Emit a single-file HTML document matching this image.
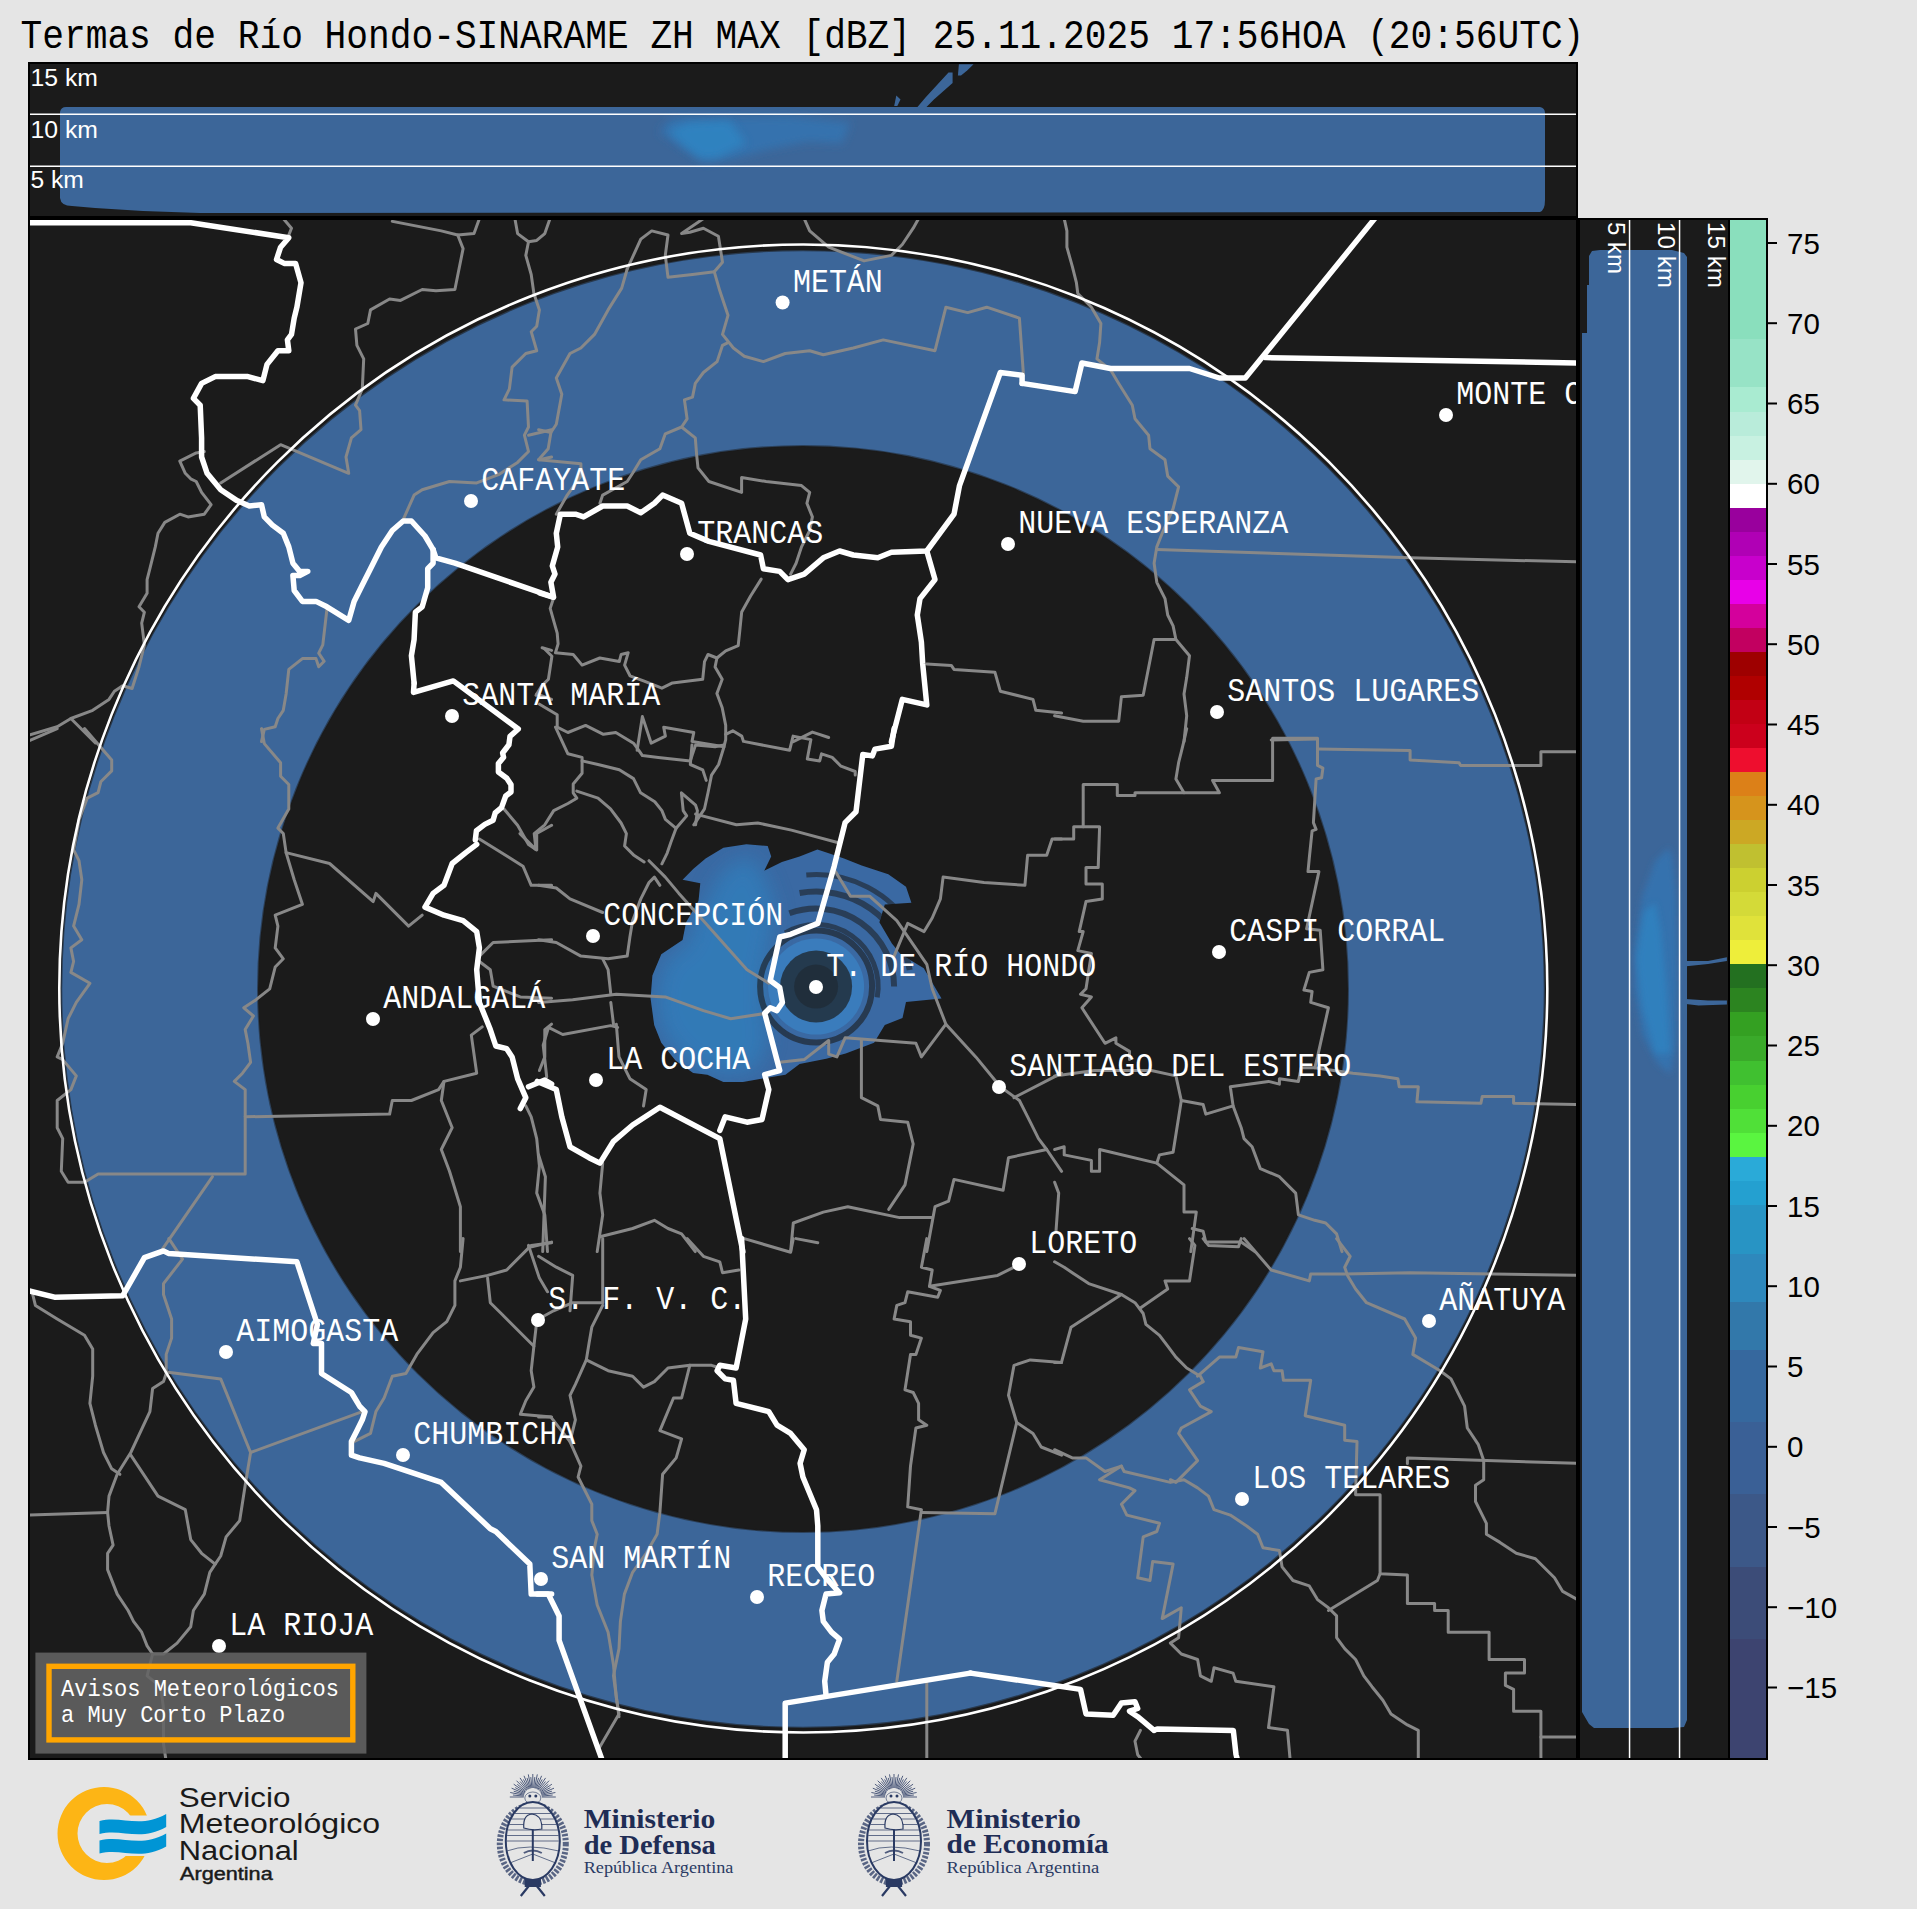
<!DOCTYPE html>
<html><head><meta charset="utf-8">
<style>
html,body{margin:0;padding:0;background:#e5e5e5;width:1917px;height:1909px;overflow:hidden}
svg{position:absolute;left:0;top:0;display:block}
.mono{font-family:"Liberation Mono",monospace}
.sans{font-family:"Liberation Sans",sans-serif}
</style></head><body>
<svg width="1917" height="1909" viewBox="0 0 1917 1909">
<defs>
<clipPath id="mapclip"><rect x="30" y="220" width="1546" height="1538"/></clipPath>
<clipPath id="topclip"><rect x="30" y="64" width="1546" height="152"/></clipPath>
<clipPath id="sideclip"><rect x="1580" y="220" width="148" height="1538"/></clipPath>
</defs>
<rect x="0" y="0" width="1917" height="1909" fill="#e5e5e5"/>
<!-- title -->
<text class="mono" x="20.5" y="47.6" font-size="36.2" fill="#000" transform="translate(0,47.6) scale(1,1.1) translate(0,-47.6)">Termas de Río Hondo-SINARAME ZH MAX [dBZ] 25.11.2025 17:56HOA (20:56UTC)</text>
<!-- top panel -->
<rect x="28" y="62" width="1550" height="156" fill="#000"/>
<rect x="30" y="64" width="1546" height="152" fill="#1b1b1b"/>
<g clip-path="url(#topclip)">
<path d="M60,112 Q61,107 66,107 L1540,107 Q1545,108 1545,113 L1545,200 Q1545,210 1540,212 L200,213 L143,211 L95,208 L72,206 Q61,206 60,198 Z" fill="#3c6699"/>
<defs><filter id="tblur" x="-20%" y="-50%" width="140%" height="200%"><feGaussianBlur stdDeviation="4"/></filter></defs><path d="M659.5,132.0 L670.9,118.4 L725.2,117.4 L787.8,116.3 L850.4,122.6 L842.0,143.5 L808.7,141.4 L766.9,149.7 L735.6,158.1 L704.3,162.2 L687.6,151.8 Z" fill="#3672ae" filter="url(#tblur)"/><path d="M668.9,130.9 L687.6,122.6 L729.4,120.5 L746.1,143.5 L716.8,158.1 L700.2,158.1 L683.5,145.6 Z" fill="#2d86c4" opacity="0.8" filter="url(#tblur)"/><path d="M913.0,112.2 L925.5,97.6 L948.5,72.5 L952.6,72.5 L952.6,83.0 L933.9,99.6 L921.3,112.2 Z" fill="#3c6699"/><path d="M894.2,105.9 L896.3,95.5 L900.5,99.6 L897.3,105.9 Z" fill="#3c6699"/><path d="M957.9,75.6 L958.9,64.2 L973.5,64.2 L967.2,70.4 L961.0,75.6 Z" fill="#3c6699"/>
<rect x="30" y="113.5" width="1546" height="1.5" fill="#fff"/>
<rect x="30" y="165.5" width="1546" height="1.5" fill="#fff"/>
<g class="sans" font-size="23" fill="#fff"><text x="30.5" y="86" textLength="67.4" lengthAdjust="spacingAndGlyphs">15 km</text><text x="30.5" y="138.2" textLength="67.4" lengthAdjust="spacingAndGlyphs">10 km</text><text x="30.5" y="188.3" textLength="53.4" lengthAdjust="spacingAndGlyphs">5 km</text></g>
</g>
<!-- map -->
<rect x="28" y="218" width="1550" height="1542" fill="#000"/>
<rect x="30" y="220" width="1546" height="1538" fill="#1b1b1b"/>
<g clip-path="url(#mapclip)">
<path fill-rule="evenodd" fill="#3c6699" d="M61,989 A742,739 0 1,0 1545,989 A742,739 0 1,0 61,989 Z M258,989 A545,543 0 1,0 1348,989 A545,543 0 1,0 258,989 Z"/><ellipse cx="803" cy="989" rx="742" ry="739" fill="none" stroke="#1b1b1b" stroke-width="2.5" opacity="0.6"/><ellipse cx="803" cy="989" rx="545" ry="543" fill="none" stroke="#1b1b1b" stroke-width="2" opacity="0.5"/>
<defs><clipPath id="blobclip"><path d="M650.6,998.5 L652.4,975.4 L661.3,954.2 L682.6,940.0 L686.1,922.2 L698.5,900.9 L700.3,883.2 L682.6,879.7 L693.2,869.0 L705.6,858.4 L723.4,847.7 L746.4,844.2 L767.7,846.0 L771.2,856.6 L764.2,870.8 L781.9,861.9 L799.6,856.6 L817.4,849.5 L828.0,853.1 L844.0,858.4 L861.7,865.5 L888.3,874.3 L906.0,886.8 L911.4,902.7 L884.8,904.5 L879.4,922.2 L891.9,943.5 L900.7,954.2 L923.8,968.3 L941.5,998.5 L906.0,1002.0 L902.5,1018.0 L884.8,1025.1 L874.1,1042.8 L845.7,1053.5 L826.2,1058.8 L799.6,1064.1 L785.4,1074.8 L764.2,1078.3 L742.9,1081.9 L723.4,1081.9 L707.4,1074.8 L693.2,1073.0 L675.5,1060.6 L661.3,1042.8 L654.2,1025.1 Z"/></clipPath><filter id="blur8" x="-30%" y="-30%" width="160%" height="160%"><feGaussianBlur stdDeviation="10"/></filter></defs><path d="M650.6,998.5 L652.4,975.4 L661.3,954.2 L682.6,940.0 L686.1,922.2 L698.5,900.9 L700.3,883.2 L682.6,879.7 L693.2,869.0 L705.6,858.4 L723.4,847.7 L746.4,844.2 L767.7,846.0 L771.2,856.6 L764.2,870.8 L781.9,861.9 L799.6,856.6 L817.4,849.5 L828.0,853.1 L844.0,858.4 L861.7,865.5 L888.3,874.3 L906.0,886.8 L911.4,902.7 L884.8,904.5 L879.4,922.2 L891.9,943.5 L900.7,954.2 L923.8,968.3 L941.5,998.5 L906.0,1002.0 L902.5,1018.0 L884.8,1025.1 L874.1,1042.8 L845.7,1053.5 L826.2,1058.8 L799.6,1064.1 L785.4,1074.8 L764.2,1078.3 L742.9,1081.9 L723.4,1081.9 L707.4,1074.8 L693.2,1073.0 L675.5,1060.6 L661.3,1042.8 L654.2,1025.1 Z" fill="#3a69a3"/><g clip-path="url(#blobclip)"><path d="M656.0,998.5 L659.5,975.4 L668.4,957.7 L689.7,941.7 L693.2,922.2 L707.4,900.9 L714.5,883.2 L728.7,865.5 L750.0,856.6 L764.2,876.1 L774.8,904.5 L771.2,936.4 L764.2,971.9 L764.2,1007.4 L767.7,1042.8 L755.3,1069.4 L725.1,1074.8 L693.2,1065.9 L671.9,1046.4 L659.5,1025.1 Z" fill="#2f85c4" opacity="0.6" filter="url(#blur8)"/><path d="M785.1,932.9 A62,62 0 0,1 877.2,997.4" fill="none" stroke="#1b1b1b" stroke-width="5" opacity="0.55"/><path d="M789.4,913.3 A78,78 0 0,1 894.1,986.6" fill="none" stroke="#1b1b1b" stroke-width="6" opacity="0.55"/><path d="M799.6,893.0 A95,95 0 0,1 909.7,970.1" fill="none" stroke="#1b1b1b" stroke-width="6" opacity="0.55"/><path d="M806.3,875.0 A112,112 0 0,1 913.1,930.6" fill="none" stroke="#1b1b1b" stroke-width="5" opacity="0.55"/><circle cx="816.1" cy="986.6" r="56" fill="none" stroke="#1b1b1b" stroke-width="6" opacity="0.6"/></g><circle cx="816.1" cy="986.6" r="48" fill="#3a7cbc"/><circle cx="816.1" cy="986.6" r="36" fill="#1b1b1b" opacity="0.68"/><circle cx="816.1" cy="986.6" r="22" fill="#1b1b1b" opacity="0.35"/>
<g fill="none" stroke="#888888" stroke-width="3" stroke-linejoin="round" stroke-linecap="round"><path d="M30.0,734.8 L57.2,726.7 L70.9,718.5 L92.7,710.3 L109.0,699.4 L114.4,691.2 L122.6,685.8 L132.1,688.5 L139.0,666.7 L144.4,644.9 L141.7,623.1 L144.4,612.2 L139.0,606.8 L147.1,593.2 L147.1,579.6 L149.9,568.7 L155.3,546.9 L158.0,533.3 L164.8,522.4 L179.8,514.2 L188.0,516.9 L204.3,514.2 L211.1,504.7 L201.6,492.4 L196.2,481.5 L190.7,478.8 L185.3,473.3 L179.8,461.1 L196.2,452.9 L204.3,451.5"/><path d="M70.9,718.5 L95.4,743.0"/><path d="M220.7,482.9 L280.6,444.7 L348.7,473.3 L346.0,457.0 L351.4,437.9 L361.0,429.7 L359.6,410.7 L355.5,405.2 L362.3,388.9 L363.7,358.9 L356.9,345.3 L355.5,329.0 L367.8,323.5 L370.5,309.9 L389.6,299.0 L400.5,300.4 L422.2,289.5 L435.9,290.8 L454.9,289.5 L463.1,248.6 L457.7,235.0 L441.3,230.9 L392.3,221.4"/><path d="M457.7,235.0 L474.0,233.6 L479.4,218.6"/><path d="M283.3,218.6 L291.5,228.2 L288.8,235.0"/><path d="M514.9,218.6 L517.6,233.6 L528.5,241.8 L536.7,240.4 L544.8,233.6 L550.0,218.6"/><path d="M528.5,241.8 L525.8,255.4 L531.2,274.5 L533.9,293.5 L539.4,309.9 L536.7,326.2 L531.2,331.7 L536.7,350.7 L525.8,353.5 L512.1,367.1 L509.4,388.9 L504.0,399.8 L527.1,401.1 L528.5,427.0 L524.4,435.2 L528.5,451.5 L517.6,462.4 L498.5,474.7 L476.7,482.9 L449.5,481.5 L422.2,489.7 L414.1,495.1 L403.2,519.6"/><path d="M528.5,435.2 L551.6,429.7"/><path d="M539.4,459.7 L551.6,457.0"/><path d="M326.9,609.5 L322.8,644.9 L318.7,653.1 L324.2,661.3 L318.7,666.7 L316.0,658.6 L302.4,658.6 L288.8,669.4 L286.1,694.0 L283.3,710.3 L277.9,718.5 L275.2,726.7 L264.3,729.4 L261.5,741.6"/><path d="M542.1,647.7 L551.6,650.4"/><path d="M536.7,694.0 L551.6,699.4"/><path d="M627.2,269.0 L640.8,239.1 L651.7,230.9 L668.0,235.0 L665.3,255.4 L668.0,277.2 L692.5,274.5 L714.3,271.8 L722.5,262.2 L718.4,236.3 L703.4,228.2 L689.8,232.3 L681.6,233.6 L703.4,218.6"/><path d="M714.3,271.8 L719.8,290.8 L728.0,315.3 L722.5,334.4 L733.4,348.0 L744.3,356.2 L763.4,361.6 L785.2,353.5 L809.7,350.7 L823.3,354.8 L853.3,348.0 L883.2,339.9 L935.0,350.7 L945.9,307.2 L967.7,312.6 L986.7,307.2 L1019.4,318.1 L1023.5,375.3"/><path d="M627.2,269.0 L621.7,288.1 L608.1,309.9 L594.5,334.4 L580.9,348.0 L570.0,353.5 L556.3,378.0 L561.8,394.3 L556.3,424.3 L550.9,432.5 L538.6,429.7"/><path d="M550.9,432.5 L548.2,448.8 L538.6,459.7"/><path d="M538.6,459.7 L580.9,463.8 L580.9,476.1 L567.2,495.1 L556.3,514.2"/><path d="M728.0,342.6 L722.5,345.3 L717.1,361.6 L703.4,372.5 L695.3,383.4 L692.5,397.1 L684.4,399.8 L687.1,418.8 L681.6,427.0 L665.3,433.8 L659.9,448.8 L640.8,459.7 L632.6,473.3 L627.2,481.5 L602.7,495.1 L599.9,503.3"/><path d="M681.6,427.0 L695.3,437.9 L696.6,454.3 L698.0,467.9 L708.9,481.5 L741.6,492.4 L741.6,477.4 L766.1,481.5 L801.5,485.6 L809.7,492.4 L806.9,503.3 L812.4,516.9 L809.7,530.5 L801.5,546.9 L796.1,563.2 L790.6,574.1"/><path d="M926.8,664.0 L951.3,665.4 L954.0,669.4 L994.9,672.2 L1000.3,691.2 L1033.0,699.4 L1035.8,710.3 L1061.6,713.0"/><path d="M793.3,741.6 L812.4,732.1 L828.7,737.5"/><path d="M804.2,218.6 L809.7,230.9 L828.7,247.2 L864.1,260.9 L891.4,255.4 L902.3,244.5 L913.2,228.2 L918.6,218.6"/><path d="M1064.2,218.6 L1066.9,230.9 L1066.9,247.2 L1072.3,266.3 L1076.4,282.7 L1077.8,293.5 L1091.4,307.2 L1100.9,323.5 L1099.6,342.6 L1096.9,358.9 L1110.5,369.8 L1118.7,383.4 L1132.3,405.2 L1135.0,418.8 L1148.6,435.2 L1150.0,448.8 L1165.0,459.7 L1167.7,476.1 L1178.6,486.9 L1173.1,508.7 L1162.2,533.3 L1156.8,546.9 L1154.1,563.2 L1156.8,582.3 L1165.0,598.6 L1167.7,615.0 L1173.1,625.9 L1175.9,639.5 L1189.5,655.8 L1186.7,677.6 L1184.0,694.0 L1186.7,715.8 L1184.0,741.6"/><path d="M1156.8,549.6 L1410.1,557.8 L1577.6,561.9"/><path d="M1175.9,639.5 L1154.1,639.5 L1143.2,695.3 L1121.4,696.7 L1118.7,721.2 L1083.2,721.2 L1054.6,715.8"/><path d="M1271.2,740.0 L1317.5,738.9"/><path d="M28.6,740.9 L57.2,728.6"/><path d="M84.5,728.6 L111.7,760.0 L111.7,770.9 L100.8,781.8 L98.1,792.7 L87.2,798.1 L79.0,819.9 L73.6,849.9 L79.0,860.7 L81.8,879.8 L79.0,904.3 L73.6,926.1 L81.8,939.7 L70.9,947.9 L73.6,961.5 L70.9,972.4 L89.9,983.3 L76.3,1002.4 L68.1,1018.7 L62.7,1043.3 L57.2,1056.9 L62.7,1059.6 L76.3,1075.9 L70.9,1089.6 L57.2,1100.5 L57.2,1127.7 L62.7,1138.6 L61.3,1171.3 L68.1,1182.2 L84.5,1182.2 L98.1,1174.0 L245.2,1174.0 L245.2,1089.6 L234.3,1081.4 L242.5,1073.2 L250.6,1062.3 L247.9,1043.3 L245.2,1029.6 L253.4,1016.0 L243.8,1007.8 L256.1,999.7 L269.7,988.8 L275.2,967.0 L283.3,958.8 L275.2,947.9 L277.9,926.1 L275.2,915.2 L302.4,904.3 L294.2,879.8 L286.1,852.6 L283.3,833.5 L277.9,828.1 L288.8,809.0 L288.8,784.5 L280.6,776.3 L280.6,762.7 L264.3,743.6 L261.5,728.6"/><path d="M286.1,852.6 L329.6,863.5 L373.2,901.6 L375.9,893.4 L408.6,926.1 L422.2,915.2"/><path d="M245.2,1116.8 L389.6,1114.1 L392.3,1100.5 L411.4,1100.5 L438.6,1089.6 L444.0,1081.4 L476.7,1073.2 L471.3,1035.1 L482.2,1026.9"/><path d="M444.0,1081.4 L441.3,1100.5 L452.2,1127.7 L441.3,1149.5 L449.5,1171.3 L460.4,1206.7 L460.4,1251.6"/><path d="M212.5,1176.7 L160.7,1251.6"/><path d="M479.4,839.0 L523.0,866.2 L531.2,885.3 L551.6,885.3"/><path d="M504.0,809.0 L517.6,825.3 L528.5,844.4 L536.7,849.9 L536.7,833.5 L551.6,825.3"/><path d="M479.4,956.1 L493.1,942.5 L551.6,939.7"/><path d="M479.4,961.5 L490.3,969.7 L493.1,986.1 L520.3,996.9 L551.6,998.3"/><path d="M525.8,1105.9 L531.2,1116.8 L536.7,1138.6 L539.4,1165.8 L536.7,1193.1 L544.8,1214.9 L547.5,1251.6"/><path d="M539.4,1070.5 L544.8,1056.9 L544.8,1029.6 L551.6,1024.2"/><path d="M528.5,1247.5 L551.6,1242.1"/><path d="M649.0,860.7 L665.3,877.1 L678.9,893.4 L703.4,920.7 L747.0,969.7 L768.8,983.3"/><path d="M538.6,885.3 L556.3,888.0 L570.0,898.9 L602.7,912.5"/><path d="M538.6,939.7 L556.3,942.5 L580.9,956.1 L608.1,958.8 L627.2,956.1 L629.9,937.0 L632.6,920.7 L640.8,898.9 L649.0,882.5 L654.4,877.1 L659.9,885.3"/><path d="M538.6,1002.4 L572.7,999.7 L616.3,994.2 L665.3,996.9 L703.4,1010.6 L730.7,1018.7 L766.1,1013.3"/><path d="M546.7,1077.0 L543.2,1045.1 L548.5,1027.4 L562.7,1034.5 L610.6,1025.6 L617.7,1027.4"/><path d="M610.8,1002.4 L613.5,1024.2"/><path d="M610.8,994.2 L608.1,969.7 L602.7,958.8"/><path d="M616.3,1024.2 L619.0,1056.9 L629.9,1078.7 L646.2,1089.6 L643.5,1105.9"/><path d="M835.5,871.6 L850.5,896.2 L869.6,896.2 L896.8,920.7 L926.8,964.3 L932.2,988.8 L945.9,1024.2 L975.8,1056.9 L1000.3,1086.8 L1019.4,1100.5 L1030.3,1122.2 L1038.5,1138.6 L1046.7,1149.5 L1061.6,1171.3"/><path d="M894.1,956.1 L907.7,923.4 L924.1,931.6 L932.2,918.0 L940.4,898.9 L943.1,877.1 L984.0,882.5 L1024.9,885.3 L1027.6,855.3 L1046.7,855.3 L1052.1,839.0 L1061.6,839.0"/><path d="M945.9,1024.2 L921.4,1056.9 L915.9,1043.3 L845.1,1037.8 L836.9,1056.9 L828.7,1054.1 L828.7,1040.5 L804.2,1059.6 L779.7,1062.3"/><path d="M861.4,1040.5 L861.4,1097.7 L877.8,1105.9 L880.5,1119.5 L907.7,1122.2 L913.2,1144.0 L905.0,1184.9 L888.7,1209.4"/><path d="M1014.0,1097.7 L1061.6,1073.2"/><path d="M1046.7,1149.5 L1008.5,1157.7 L1003.1,1190.3 L954.0,1179.4 L948.6,1201.2 L935.0,1206.7 L926.8,1251.6"/><path d="M790.6,1251.6 L793.3,1223.0 L823.3,1212.1 L847.8,1206.7 L899.6,1217.6 L932.2,1217.6"/><path d="M538.6,1154.9 L545.4,1176.7 L542.7,1251.6"/><path d="M602.7,1163.1 L599.9,1193.1 L602.7,1214.9 L597.2,1251.6"/><path d="M599.9,1236.7 L632.6,1228.5 L654.4,1220.3 L668.0,1228.5 L681.6,1233.9 L695.3,1251.6"/><path d="M1186.7,728.6 L1184.0,740.9 L1181.3,751.8 L1178.6,762.7 L1175.9,779.0 L1184.0,792.7"/><path d="M1083.2,826.7 L1083.2,784.5 L1117.3,784.5 L1117.3,795.4 L1135.0,795.4 L1135.0,792.7 L1219.4,792.7 L1212.6,780.4 L1272.6,780.4 L1272.6,738.2 L1317.5,738.2 L1317.5,765.4 L1322.9,768.1 L1321.6,777.7 L1316.1,779.0 L1313.4,822.6 L1316.1,829.4 L1312.1,830.8 L1309.3,858.0 L1308.0,871.6 L1318.9,871.6 L1306.6,928.8 L1320.2,930.2 L1322.9,969.7 L1309.3,972.4 L1303.9,990.1 L1312.1,991.5 L1310.7,1002.4 L1328.4,1007.8 L1317.5,1056.9 L1314.8,1067.8 L1352.9,1073.2 L1380.1,1075.9 L1397.9,1078.7 L1399.2,1086.8 L1418.3,1086.8 L1416.9,1101.8 L1480.9,1103.2 L1482.3,1096.4 L1513.6,1096.4 L1513.6,1103.2 L1577.6,1104.5"/><path d="M1317.5,749.1 L1410.1,750.4 L1410.1,760.0 L1459.1,762.7 L1460.5,765.4 L1540.9,765.4 L1540.9,751.8 L1577.6,751.8"/><path d="M1054.6,839.0 L1073.7,839.0 L1073.7,826.7 L1099.6,826.7 L1098.2,867.6 L1086.0,867.6 L1086.0,883.9 L1102.3,883.9 L1102.3,898.9 L1086.0,901.6 L1079.2,931.6 L1083.2,931.6 L1077.8,950.6 L1091.4,953.4 L1086.0,988.8 L1080.5,994.2 L1091.4,996.9 L1081.9,1007.8 L1105.0,1043.3 L1115.9,1037.8 L1115.9,1043.3 L1129.5,1051.4 L1129.5,1059.6"/><path d="M1054.6,1075.9 L1094.1,1070.5 L1151.3,1070.5 L1175.9,1075.9 L1181.3,1100.5 L1203.1,1104.5 L1205.8,1114.1 L1233.1,1105.9 L1230.3,1086.8 L1268.5,1081.4 L1279.4,1084.1 L1279.4,1078.7 L1298.4,1081.4 L1301.2,1067.8 L1314.8,1067.8"/><path d="M1181.3,1100.5 L1173.1,1152.2 L1159.5,1154.9 L1156.8,1163.1 L1184.0,1184.9 L1184.0,1212.1 L1196.3,1212.1 L1190.8,1251.6"/><path d="M1233.1,1105.9 L1241.2,1127.7 L1244.0,1138.6 L1252.1,1146.8 L1260.3,1168.6 L1279.4,1176.7 L1295.7,1193.1 L1298.4,1214.9 L1314.8,1220.3 L1325.7,1223.0 L1336.6,1233.9 L1342.0,1251.6"/><path d="M1054.6,1149.5 L1064.2,1146.8 L1064.2,1154.9 L1091.4,1160.4 L1091.4,1171.3 L1099.6,1171.3 L1099.6,1149.5 L1156.8,1163.1"/><path d="M1054.6,1182.2 L1058.7,1193.1 L1056.0,1231.2"/><path d="M1192.2,1228.5 L1203.1,1231.2 L1205.8,1242.1 L1241.2,1242.1 L1254.8,1251.6"/><path d="M168.9,1238.6 L182.5,1259.1 L163.5,1283.6 L163.5,1294.5 L171.6,1319.0 L171.6,1338.1 L166.2,1354.4 L166.2,1373.5 L163.5,1381.6 L152.6,1388.5 L149.9,1411.6 L130.8,1452.5 L117.2,1474.3 L109.0,1496.1 L107.6,1512.4 L109.0,1526.0 L113.1,1545.1 L107.6,1553.3 L107.6,1569.6 L117.2,1594.1 L128.1,1610.5 L133.5,1621.4 L141.7,1632.2 L147.1,1645.9 L152.6,1654.0 L147.1,1675.8 L160.7,1686.7 L163.5,1708.5 L163.5,1743.9 L166.2,1761.6"/><path d="M32.7,1294.5 L35.4,1305.4 L57.2,1319.0 L84.5,1335.3 L92.7,1349.0 L92.7,1376.2 L89.9,1403.4 L95.4,1425.2 L103.5,1452.5 L111.7,1468.8 L119.9,1474.3"/><path d="M28.6,1515.1 L107.6,1512.4"/><path d="M166.2,1372.1 L220.7,1378.9 L250.6,1452.5 L362.3,1411.6"/><path d="M250.6,1452.5 L245.2,1485.2 L239.7,1520.6 L226.1,1536.9 L220.7,1556.0 L215.2,1564.1 L209.8,1572.3 L204.3,1594.1 L193.4,1610.5 L190.7,1626.8 L177.1,1643.1 L163.5,1654.0 L152.6,1654.0"/><path d="M130.8,1455.2 L158.0,1496.1 L185.3,1509.7 L190.7,1539.6 L201.6,1553.3 L215.2,1564.1"/><path d="M354.1,1441.6 L370.5,1433.4 L375.9,1411.6 L384.1,1398.0 L392.3,1376.2 L405.9,1373.5 L416.8,1354.4 L433.1,1332.6 L446.8,1321.7 L454.9,1305.4 L454.9,1280.9 L460.4,1267.2 L463.1,1238.6"/><path d="M460.4,1280.9 L487.6,1275.4 L506.7,1270.0 L523.0,1253.6 L531.2,1245.4 L551.6,1242.7"/><path d="M487.6,1278.1 L490.3,1302.7 L501.2,1313.5 L509.4,1321.7 L533.9,1346.2 L536.7,1321.7"/><path d="M533.9,1346.2 L531.2,1370.7 L533.9,1387.1 L525.8,1400.7 L520.3,1414.3 L551.6,1417.1"/><path d="M528.5,1245.4 L539.4,1278.1 L547.5,1291.8"/><path d="M538.6,1319.0 L553.6,1310.8 L572.7,1302.7 L602.7,1302.7 L602.7,1238.6"/><path d="M602.7,1305.4 L591.8,1327.2 L589.0,1343.5 L586.3,1359.9 L575.4,1384.4 L570.0,1395.3 L575.4,1419.8 L570.0,1441.6 L580.9,1466.1 L578.1,1477.0 L591.8,1504.2 L591.8,1520.6 L597.2,1534.2 L594.5,1547.8 L591.8,1575.0 L597.2,1605.0 L608.1,1632.2 L613.5,1664.9 L616.3,1697.6 L619.0,1714.0 L599.9,1746.7"/><path d="M586.3,1359.9 L608.1,1370.7 L632.6,1376.2 L643.5,1387.1 L654.4,1381.6 L668.0,1368.0 L689.8,1365.3 L711.6,1365.3 L719.8,1368.0"/><path d="M689.8,1365.3 L681.6,1398.0 L673.5,1398.0 L659.9,1430.7 L681.6,1438.8 L676.2,1457.9 L662.6,1474.3 L659.9,1512.4 L657.1,1534.2 L646.2,1553.3 L632.6,1572.3 L624.4,1594.1 L620.4,1621.4 L619.0,1648.6 L613.5,1675.8 L619.0,1716.7"/><path d="M538.6,1417.1 L550.9,1417.1 L570.0,1441.6"/><path d="M538.6,1256.3 L556.3,1267.2 L572.7,1275.4 L570.0,1310.8"/><path d="M687.1,1238.6 L703.4,1256.3 L719.8,1261.8 L722.5,1272.7 L738.8,1270.0"/><path d="M744.3,1238.6 L790.6,1252.3 L793.3,1238.6"/><path d="M796.1,1238.6 L817.8,1242.7"/><path d="M926.8,1238.6 L921.4,1267.2 L932.2,1270.0 L929.5,1286.3 L940.4,1290.4 L937.7,1297.2 L907.7,1291.8 L905.0,1302.7 L896.8,1305.4 L894.1,1319.0 L910.5,1321.7 L910.5,1335.3 L921.4,1338.1 L915.9,1354.4 L910.5,1354.4 L905.0,1389.8 L913.2,1392.5 L918.6,1403.4 L918.6,1419.8 L926.8,1425.2 L915.9,1428.0 L910.5,1466.1 L907.7,1506.9 L921.4,1509.7 L896.8,1681.3"/><path d="M921.4,1512.4 L994.9,1513.8 L1016.7,1422.5 L1008.5,1395.3 L1014.0,1365.3 L1030.3,1359.9 L1061.6,1362.6"/><path d="M1016.7,1422.5 L1033.0,1433.4 L1041.2,1447.0 L1061.6,1455.2"/><path d="M929.5,1286.3 L997.6,1275.4 L1019.4,1264.5"/><path d="M926.8,1681.3 L926.8,1761.6"/><path d="M1054.6,1261.8 L1064.2,1267.2 L1072.3,1272.7 L1088.7,1283.6 L1121.4,1294.5 L1135.0,1302.7 L1143.2,1313.5 L1145.9,1324.4 L1159.5,1335.3 L1167.7,1346.2 L1175.9,1357.1 L1186.7,1368.0 L1200.4,1376.2 L1203.1,1381.6"/><path d="M1121.4,1294.5 L1071.0,1327.2 L1061.4,1362.6 L1054.6,1362.6"/><path d="M1140.4,1308.1 L1167.7,1289.0 L1165.0,1280.9 L1189.5,1280.9 L1194.9,1245.4 L1189.5,1238.6"/><path d="M1203.1,1238.6 L1208.5,1245.4 L1238.5,1246.8 L1241.2,1238.6"/><path d="M1244.0,1238.6 L1271.2,1270.0 L1309.3,1280.9 L1310.7,1274.0 L1344.7,1274.0 L1410.1,1272.7 L1577.6,1275.4"/><path d="M1336.6,1238.6 L1350.2,1256.3 L1344.7,1267.2 L1347.5,1275.4 L1355.6,1289.0 L1366.5,1302.7 L1404.7,1319.0 L1415.6,1338.1 L1412.8,1354.4 L1440.1,1370.7 L1451.0,1378.9 L1464.6,1406.2 L1467.3,1428.0 L1478.2,1444.3 L1483.7,1460.6 L1483.7,1479.7 L1475.5,1485.2 L1475.5,1501.5 L1486.4,1523.3 L1486.4,1534.2 L1500.0,1542.4 L1516.3,1553.3 L1535.4,1558.7 L1554.5,1577.8 L1562.7,1591.4 L1577.6,1599.6"/><path d="M1407.4,1463.4 L1407.4,1457.9 L1577.6,1463.4"/><path d="M1197.6,1376.2 L1219.4,1357.1 L1235.8,1357.1 L1238.5,1347.6 L1263.0,1351.7 L1260.3,1368.0 L1271.2,1363.9 L1273.9,1370.7 L1282.1,1370.7 L1283.4,1380.3 L1310.7,1380.3 L1305.2,1415.7 L1344.7,1425.2 L1344.7,1440.2 L1357.0,1441.6 L1355.6,1494.7 L1380.1,1494.7 L1380.1,1573.7 L1407.4,1575.0 L1407.4,1603.6 L1434.6,1603.6 L1434.6,1610.5 L1448.2,1610.5 L1448.2,1632.2 L1489.1,1632.2 L1489.1,1659.5 L1524.5,1659.5 L1524.5,1673.1 L1505.4,1673.1 L1505.4,1685.4 L1513.6,1689.4 L1513.6,1711.2 L1540.9,1711.2 L1540.9,1761.6"/><path d="M1540.9,1737.1 L1577.6,1737.1"/><path d="M1203.1,1381.6 L1189.5,1389.8 L1200.4,1406.2 L1211.3,1411.6 L1181.3,1428.0 L1178.6,1433.4 L1197.6,1460.6 L1175.9,1482.4 L1170.4,1479.7"/><path d="M1054.6,1449.7 L1072.3,1457.9 L1086.0,1457.9 L1105.0,1471.5 L1121.4,1466.1 L1124.1,1471.5 L1170.4,1482.4 L1184.0,1479.7 L1197.6,1487.9 L1208.5,1496.1 L1214.0,1509.7 L1230.3,1515.1 L1246.7,1526.0 L1257.6,1534.2 L1263.0,1547.8 L1279.4,1550.5 L1282.1,1566.9 L1293.0,1580.5 L1309.3,1585.9 L1317.5,1599.6 L1328.4,1607.7 L1336.6,1615.9 L1336.6,1637.7 L1344.7,1648.6 L1355.6,1659.5 L1363.8,1675.8 L1372.0,1686.7 L1382.9,1700.3 L1391.0,1714.0 L1407.4,1724.9 L1418.3,1730.3 L1418.3,1761.6"/><path d="M1328.4,1610.5 L1377.4,1580.5 L1380.1,1573.7"/><path d="M1121.4,1466.1 L1099.6,1479.7 L1129.5,1487.9 L1135.0,1490.6 L1121.4,1504.2 L1126.8,1515.1 L1159.5,1523.3 L1156.8,1531.5 L1143.2,1536.9 L1137.7,1577.8 L1150.0,1580.5 L1152.7,1561.4 L1173.1,1564.1 L1162.2,1618.6 L1181.3,1607.7 L1178.6,1637.7 L1170.4,1643.1 L1181.3,1654.0 L1197.6,1659.5 L1200.4,1675.8 L1211.3,1681.3 L1214.0,1667.7 L1233.1,1673.1 L1235.8,1681.3 L1273.9,1686.7 L1268.5,1727.6 L1287.5,1730.3 L1290.3,1761.6"/><path d="M1140.4,1730.3 L1135.0,1741.2 L1137.7,1754.8 L1143.2,1761.6"/><path d="M553.7,597.7 L550.2,608.4 L553.7,620.8 L557.2,633.2 L558.1,643.8 L555.5,652.7 L573.2,654.5 L582.1,665.1 L599.8,658.0 L619.3,661.6 L621.1,654.5 L628.2,652.7 L624.6,665.1 L630.0,675.8 L644.2,681.1 L661.9,688.2 L672.5,682.9 L688.5,681.1 L702.7,679.3 L704.5,661.6 L708.0,654.5 L716.9,658.0 L715.1,666.9 L722.2,679.3 L716.9,693.5 L722.2,707.7 L725.7,725.4 L725.7,739.6 L724.0,746.7 L718.6,764.5 L711.5,775.1 L708.0,792.8 L704.5,808.8 L693.8,824.8"/><path d="M543.9,648.3 L551.9,656.3 L548.4,679.3 L541.3,686.4 L536.0,695.3"/><path d="M716.9,658.0 L725.7,650.9 L738.2,645.6 L739.9,629.7 L741.7,611.9 L750.6,596.0 L761.2,579.1"/><path d="M539.5,704.2 L557.2,714.8 L557.2,727.2 L567.9,732.5 L585.6,725.4 L603.4,734.3 L615.8,732.5 L633.5,743.2 L638.8,750.3 L642.4,755.6 L658.3,757.4 L690.3,760.9 L695.6,744.9 L715.1,746.7 L724.0,744.9"/><path d="M637.1,750.3 L642.4,716.6 L651.2,743.2 L665.4,736.1 L663.7,727.2 L693.8,732.5 L692.0,741.4 L724.0,746.7"/><path d="M725.7,734.3 L732.8,730.8 L741.7,736.1 L743.5,741.4 L789.6,750.3 L793.1,736.1 L810.9,739.6 L807.3,759.1 L819.7,760.9 L821.5,753.8 L832.2,757.4 L841.0,766.2 L855.2,771.5 L855.2,775.1"/><path d="M692.0,744.9 L690.3,764.5 L702.7,769.8 L706.2,780.4"/><path d="M555.5,727.2 L567.9,753.8 L582.1,757.4 L582.1,773.3 L573.2,784.0 L573.2,792.8 L576.8,798.2 L567.9,803.5 L553.7,810.6 L544.8,824.8 L534.2,833.6 L536.0,849.6 L520.0,833.6"/><path d="M582.1,760.9 L598.0,764.5 L619.3,769.8 L633.5,778.6 L640.6,792.8 L654.8,801.7 L661.9,810.6 L665.4,819.4 L676.1,828.3 L670.8,842.5 L667.2,853.1 L661.9,863.8"/><path d="M576.8,791.1 L598.0,798.2 L610.5,808.8 L621.1,823.0 L626.4,833.6 L624.6,846.0 L633.5,854.9 L644.2,862.0"/><path d="M676.1,828.3 L686.7,815.9 L683.2,810.6 L681.4,792.8 L695.6,805.2 L697.4,810.6 L695.6,824.8"/><path d="M695.6,814.1 L736.4,824.8 L757.7,823.0 L791.4,830.1 L837.5,842.5"/></g>
<g fill="none" stroke="#ffffff" stroke-width="5.5" stroke-linejoin="round" stroke-linecap="round"><path d="M27.3,222.7 L190.7,222.7 L288.8,237.7 L280.6,247.2 L276.5,259.5 L284.7,263.6 L295.6,263.6 L301.0,282.7 L296.9,307.2 L294.2,318.1 L291.5,334.4 L287.4,339.9 L288.8,350.7 L277.9,350.7 L267.0,364.4 L262.9,380.7 L247.9,376.6 L215.2,376.6 L201.6,383.4 L193.4,398.4 L200.2,405.2 L201.6,437.9 L201.6,457.0 L207.1,473.3 L220.7,489.7 L237.0,500.6 L249.3,506.0 L261.5,504.7 L264.3,516.9 L272.4,525.1 L283.3,533.3 L288.8,546.9 L292.9,563.2 L299.7,571.4 L307.8,571.4 L299.7,575.5 L292.9,575.5 L294.2,590.5 L302.4,601.4 L316.0,601.4 L326.9,606.8 L348.7,620.4 L354.1,601.4 L362.3,585.0 L370.5,568.7 L381.4,546.9 L392.3,530.5 L403.2,521.0 L411.4,521.0 L425.0,536.0 L433.1,549.6 L435.9,557.8 L454.9,563.2 L553.0,597.0"/><path d="M433.1,549.6 L433.1,563.2 L427.7,568.7 L427.7,587.7 L422.2,606.8 L415.4,612.2 L414.1,639.5 L411.4,655.8 L414.1,683.1"/><path d="M414.1,683.1 L413.5,692.4 L453.3,680.9 L518.3,729.0 L510.0,736.4 L508.9,744.8 L502.6,753.0 L503.6,757.3 L498.4,763.6 L498.4,772.0 L506.8,778.3 L511.0,784.6 L511.0,792.0 L505.7,796.0 L501.5,807.6 L495.2,812.9 L493.1,820.2 L484.8,824.4 L476.4,830.7 L475.3,840.0"/><path d="M540.0,593.2 L553.6,597.3 L550.9,582.3 L555.0,574.1 L552.3,565.9 L557.7,546.9 L556.3,533.3 L560.4,514.2 L575.4,514.2 L583.6,516.9 L602.7,506.0 L627.2,506.0 L640.8,512.8 L654.4,503.3 L662.6,495.1 L681.6,503.3 L689.8,533.3 L708.9,541.4 L760.6,555.0 L763.4,568.7 L779.7,571.4 L787.9,579.6 L804.2,574.1 L823.3,557.8 L839.6,551.0 L853.3,555.0 L877.8,557.8 L891.4,552.3 L926.8,551.0 L954.0,514.2 L959.5,485.6 L1000.3,372.5 L1022.1,375.3 L1022.1,383.4"/><path d="M926.8,551.0 L935.0,579.6 L920.0,598.6 L917.3,615.0 L921.4,642.2 L922.7,664.0 L926.8,704.9 L902.3,699.4 L891.4,741.6"/><path d="M1022.2,383.4 L1075.1,391.6 L1081.9,363.0 L1110.5,368.5 L1189.5,368.5 L1219.4,378.0 L1245.3,378.0 L1374.7,218.6"/><path d="M1265.7,357.6 L1577.6,363.0"/><path d="M476.7,844.4 L465.8,852.6 L452.2,863.5 L444.0,885.3 L433.1,893.4 L425.0,907.1 L444.0,915.2 L463.1,920.7 L476.7,931.6 L479.4,947.9 L476.7,969.7 L479.4,1002.4 L490.3,1029.6 L495.8,1046.0 L506.7,1048.7 L512.1,1056.9 L517.6,1078.7 L525.8,1097.7 L520.3,1108.6"/><path d="M528.5,1086.8 L544.8,1080.0 L551.6,1084.1"/><path d="M894.1,728.6 L891.4,746.3 L875.0,749.1 L872.3,755.9 L862.8,754.5 L856.0,811.7 L845.1,822.6 L834.2,866.2 L817.8,923.4 L790.6,934.3 L779.7,937.0 L770.2,980.6 L779.7,987.4 L782.4,1002.4 L777.0,1010.6 L770.2,1007.8 L764.7,1013.3 L779.7,1070.5 L764.7,1074.6 L768.8,1089.6 L762.0,1119.5 L747.0,1122.2 L725.2,1116.8 L719.8,1130.4"/><path d="M537.3,1081.4 L556.3,1089.6 L561.8,1116.8 L570.0,1146.8 L589.0,1157.7 L599.9,1163.1 L613.5,1141.3 L632.6,1125.0 L659.9,1107.3 L719.8,1138.6 L742.9,1251.6"/><path d="M27.3,1290.4 L54.5,1297.2 L122.6,1295.8 L144.4,1257.7 L163.5,1250.9 L168.9,1253.6 L296.9,1261.8 L317.4,1324.4 L313.3,1343.5 L321.5,1343.5 L321.5,1373.5 L351.4,1392.5 L359.6,1406.2 L365.0,1411.6 L362.3,1419.8 L356.9,1430.7 L351.4,1441.6 L351.4,1455.2 L359.6,1457.9 L384.1,1463.4 L441.3,1482.4 L490.3,1528.7 L495.8,1531.5 L529.8,1564.1 L531.2,1594.1 L551.6,1594.1"/><path d="M741.6,1238.6 L745.7,1319.0 L736.1,1368.0 L719.8,1365.3 L717.1,1370.7 L725.2,1378.9 L733.4,1380.3 L736.1,1403.4 L768.8,1411.6 L777.0,1425.2 L790.6,1433.4 L804.2,1449.7 L800.1,1463.4 L802.9,1477.0 L816.5,1509.7 L817.8,1526.0 L817.8,1566.9 L826.0,1577.8 L839.6,1592.8 L826.0,1594.1 L821.9,1610.5 L823.3,1621.4 L831.5,1632.2 L839.6,1639.1 L834.2,1654.0 L827.4,1662.2 L824.7,1681.3 L826.0,1694.9"/><path d="M785.2,1761.6 L785.2,1703.1 L970.4,1673.1"/><path d="M537.3,1594.1 L548.2,1594.1 L559.1,1615.9 L559.1,1640.4 L602.7,1761.6"/><path d="M970.5,1673.1 L1080.5,1689.4 L1086.0,1714.0 L1113.2,1715.3 L1121.4,1703.1 L1135.0,1701.7 L1137.7,1708.5 L1129.5,1711.2 L1137.7,1716.7 L1154.1,1730.3"/><path d="M1154.1,1730.3 L1157.2,1729.0 L1233.3,1730.4 L1236.0,1754.4 L1238.0,1762.0"/></g>
<circle cx="803.3" cy="988.5" r="744" fill="none" stroke="#fff" stroke-width="2.6"/>
<g class="mono" font-size="30" fill="#fff"><circle cx="782.6" cy="302.5" r="7" fill="#fff"/><text transform="translate(792.9,291.9) scale(1,1.1)">METÁN</text><circle cx="1446" cy="415" r="7" fill="#fff"/><text transform="translate(1456.3,404.4) scale(1,1.1)">MONTE C</text><circle cx="471" cy="501" r="7" fill="#fff"/><text transform="translate(481.3,490.4) scale(1,1.1)">CAFAYATE</text><circle cx="687" cy="554" r="7" fill="#fff"/><text transform="translate(697.3,543.4) scale(1,1.1)">TRANCAS</text><circle cx="1008" cy="544" r="7" fill="#fff"/><text transform="translate(1018.3,533.4) scale(1,1.1)">NUEVA ESPERANZA</text><circle cx="452" cy="716" r="7" fill="#fff"/><text transform="translate(462.3,705.4) scale(1,1.1)">SANTA MARÍA</text><circle cx="1217" cy="712" r="7" fill="#fff"/><text transform="translate(1227.3,701.4) scale(1,1.1)">SANTOS LUGARES</text><circle cx="593" cy="936" r="7" fill="#fff"/><text transform="translate(603.3,925.4) scale(1,1.1)">CONCEPCIÓN</text><circle cx="1219" cy="952" r="7" fill="#fff"/><text transform="translate(1229.3,941.4) scale(1,1.1)">CASPI CORRAL</text><circle cx="816" cy="987" r="7" fill="#fff"/><text transform="translate(826.3,976.4) scale(1,1.1)">T. DE RÍO HONDO</text><circle cx="373" cy="1019" r="7" fill="#fff"/><text transform="translate(383.3,1008.4) scale(1,1.1)">ANDALGALÁ</text><circle cx="596" cy="1080" r="7" fill="#fff"/><text transform="translate(606.3,1069.4) scale(1,1.1)">LA COCHA</text><circle cx="999" cy="1087" r="7" fill="#fff"/><text transform="translate(1009.3,1076.4) scale(1,1.1)">SANTIAGO DEL ESTERO</text><circle cx="1019" cy="1264" r="7" fill="#fff"/><text transform="translate(1029.3,1253.4) scale(1,1.1)">LORETO</text><circle cx="538" cy="1320" r="7" fill="#fff"/><text transform="translate(548.3,1309.4) scale(1,1.1)">S. F. V. C.</text><circle cx="226" cy="1352" r="7" fill="#fff"/><text transform="translate(236.3,1341.4) scale(1,1.1)">AIMOGASTA</text><circle cx="1429" cy="1321" r="7" fill="#fff"/><text transform="translate(1439.3,1310.4) scale(1,1.1)">AÑATUYA</text><circle cx="403" cy="1455" r="7" fill="#fff"/><text transform="translate(413.3,1444.4) scale(1,1.1)">CHUMBICHA</text><circle cx="1242" cy="1499" r="7" fill="#fff"/><text transform="translate(1252.3,1488.4) scale(1,1.1)">LOS TELARES</text><circle cx="541" cy="1579" r="7" fill="#fff"/><text transform="translate(551.3,1568.4) scale(1,1.1)">SAN MARTÍN</text><circle cx="757" cy="1597" r="7" fill="#fff"/><text transform="translate(767.3,1586.4) scale(1,1.1)">RECREO</text><circle cx="219" cy="1646" r="7" fill="#fff"/><text transform="translate(229.3,1635.4) scale(1,1.1)">LA RIOJA</text></g>
<!-- avisos box -->
<rect x="35.4" y="1652.6" width="331" height="101" fill="#636363" fill-opacity="0.88"/>
<rect x="49" y="1666.3" width="303.8" height="73.6" fill="none" stroke="#ffa500" stroke-width="5.4"/>
<g class="mono" font-size="22" fill="#fff"><text transform="translate(61,1696.3) scale(1,1.08)" textLength="277.9" lengthAdjust="spacingAndGlyphs">Avisos Meteorológicos</text><text transform="translate(61,1722.2) scale(1,1.08)">a Muy Corto Plazo</text></g>
</g>
<!-- side panel -->
<rect x="1578" y="218" width="152" height="1542" fill="#000"/>
<rect x="1580" y="220" width="148" height="1538" fill="#1b1b1b"/>
<g clip-path="url(#sideclip)">
<path d="M1589,256 L1592,251 L1600,250 L1672,250 L1684,253 L1687,257 L1687,1720 L1684,1727 L1672,1728 L1594,1728 L1589,1724 L1582,1712 L1582,333 L1587,333 L1587,285 L1589,285 Z" fill="#3c6699"/>
<defs><filter id="sblur" x="-50%" y="-20%" width="200%" height="140%"><feGaussianBlur stdDeviation="3"/></filter></defs><path d="M1668.4,847.9 L1655.2,861.1 L1642.0,896.9 L1634.5,949.7 L1634.5,987.4 L1642.0,1034.6 L1657.1,1062.9 L1670.3,1074.2 L1675.9,1044.0 L1677.8,968.6 L1675.9,893.1 L1672.2,855.4 Z" fill="#3672ae" filter="url(#sblur)"/><path d="M1643.9,912.0 L1636.3,959.2 L1642.0,1006.3 L1655.2,1053.4 L1670.3,1053.4 L1666.5,987.4 L1660.9,930.9 L1655.2,902.6 Z" fill="#2d86c4" opacity="0.7" filter="url(#sblur)"/><path d="M1681.6,961.0 L1708.0,961.0 L1726.9,957.3 L1726.9,961.0 L1708.0,963.9 L1681.6,966.7 Z" fill="#3c6699"/><path d="M1681.6,998.8 L1708.0,1000.6 L1726.9,1000.6 L1726.9,1004.4 L1698.6,1005.4 L1681.6,1003.5 Z" fill="#3c6699"/>
<rect x="1628.8" y="220" width="1.5" height="1538" fill="#fff"/>
<rect x="1678.8" y="220" width="1.5" height="1538" fill="#fff"/>
<g class="sans" font-size="23" fill="#fff">
<text transform="translate(1608,222) rotate(90)" textLength="52" lengthAdjust="spacingAndGlyphs">5 km</text>
<text transform="translate(1658,222) rotate(90)" textLength="65.9" lengthAdjust="spacingAndGlyphs">10 km</text>
<text transform="translate(1708,222) rotate(90)" textLength="65.9" lengthAdjust="spacingAndGlyphs">15 km</text>
</g>
</g>
<!-- colorbar -->
<rect x="1728" y="218" width="40" height="1542" fill="#000"/>
<rect x="1730" y="220" width="36" height="119" fill="#8adfbd"/><rect x="1730" y="339" width="36" height="48" fill="#97e3c6"/><rect x="1730" y="387" width="36" height="25" fill="#a9ebd1"/><rect x="1730" y="412" width="36" height="24" fill="#b9ecda"/><rect x="1730" y="436" width="36" height="24" fill="#c8f1e1"/><rect x="1730" y="460" width="36" height="24" fill="#e1f5ec"/><rect x="1730" y="484" width="36" height="24" fill="#ffffff"/><rect x="1730" y="508" width="36" height="24" fill="#99009d"/><rect x="1730" y="532" width="36" height="24" fill="#b000b5"/><rect x="1730" y="556" width="36" height="24" fill="#c800cc"/><rect x="1730" y="580" width="36" height="24" fill="#e800e8"/><rect x="1730" y="604" width="36" height="24" fill="#d4009c"/><rect x="1730" y="628" width="36" height="24" fill="#c20060"/><rect x="1730" y="652" width="36" height="24" fill="#9e0000"/><rect x="1730" y="676" width="36" height="24" fill="#b00000"/><rect x="1730" y="700" width="36" height="24" fill="#c20014"/><rect x="1730" y="724" width="36" height="24" fill="#cc001c"/><rect x="1730" y="748" width="36" height="24" fill="#ee0e2e"/><rect x="1730" y="772" width="36" height="24" fill="#dc8018"/><rect x="1730" y="796" width="36" height="24" fill="#d6941c"/><rect x="1730" y="820" width="36" height="24" fill="#cca824"/><rect x="1730" y="844" width="36" height="24" fill="#c0c030"/><rect x="1730" y="868" width="36" height="24" fill="#ccd030"/><rect x="1730" y="892" width="36" height="24" fill="#d4da38"/><rect x="1730" y="916" width="36" height="24" fill="#e0e23a"/><rect x="1730" y="940" width="36" height="24" fill="#eeee3a"/><rect x="1730" y="964" width="36" height="24" fill="#237020"/><rect x="1730" y="988" width="36" height="24" fill="#2c8420"/><rect x="1730" y="1012" width="36" height="24" fill="#34a022"/><rect x="1730" y="1036" width="36" height="25" fill="#3aaa2a"/><rect x="1730" y="1061" width="36" height="24" fill="#40c030"/><rect x="1730" y="1085" width="36" height="24" fill="#48d030"/><rect x="1730" y="1109" width="36" height="24" fill="#50e038"/><rect x="1730" y="1133" width="36" height="24" fill="#5af540"/><rect x="1730" y="1157" width="36" height="24" fill="#2aaad8"/><rect x="1730" y="1181" width="36" height="24" fill="#24a0d0"/><rect x="1730" y="1205" width="36" height="49" fill="#2894c4"/><rect x="1730" y="1254" width="36" height="48" fill="#2e88bc"/><rect x="1730" y="1302" width="36" height="48" fill="#3278aa"/><rect x="1730" y="1350" width="36" height="72" fill="#36689e"/><rect x="1730" y="1422" width="36" height="72" fill="#3a6096"/><rect x="1730" y="1494" width="36" height="73" fill="#3c5888"/><rect x="1730" y="1567" width="36" height="72" fill="#3c4c78"/><rect x="1730" y="1639" width="36" height="119" fill="#3d4470"/>
<g class="sans" font-size="29.5" fill="#000"><rect x="1768" y="242.0" width="9" height="2" fill="#000"/><text x="1787" y="253.5">75</text><rect x="1768" y="322.2" width="9" height="2" fill="#000"/><text x="1787" y="333.8">70</text><rect x="1768" y="402.5" width="9" height="2" fill="#000"/><text x="1787" y="414.0">65</text><rect x="1768" y="482.8" width="9" height="2" fill="#000"/><text x="1787" y="494.2">60</text><rect x="1768" y="563.0" width="9" height="2" fill="#000"/><text x="1787" y="574.5">55</text><rect x="1768" y="643.2" width="9" height="2" fill="#000"/><text x="1787" y="654.8">50</text><rect x="1768" y="723.5" width="9" height="2" fill="#000"/><text x="1787" y="735.0">45</text><rect x="1768" y="803.8" width="9" height="2" fill="#000"/><text x="1787" y="815.2">40</text><rect x="1768" y="884.0" width="9" height="2" fill="#000"/><text x="1787" y="895.5">35</text><rect x="1768" y="964.2" width="9" height="2" fill="#000"/><text x="1787" y="975.8">30</text><rect x="1768" y="1044.5" width="9" height="2" fill="#000"/><text x="1787" y="1056.0">25</text><rect x="1768" y="1124.8" width="9" height="2" fill="#000"/><text x="1787" y="1136.2">20</text><rect x="1768" y="1205.0" width="9" height="2" fill="#000"/><text x="1787" y="1216.5">15</text><rect x="1768" y="1285.2" width="9" height="2" fill="#000"/><text x="1787" y="1296.8">10</text><rect x="1768" y="1365.5" width="9" height="2" fill="#000"/><text x="1787" y="1377.0">5</text><rect x="1768" y="1445.8" width="9" height="2" fill="#000"/><text x="1787" y="1457.2">0</text><rect x="1768" y="1526.0" width="9" height="2" fill="#000"/><text x="1787" y="1537.5">−5</text><rect x="1768" y="1606.2" width="9" height="2" fill="#000"/><text x="1787" y="1617.8">−10</text><rect x="1768" y="1686.5" width="9" height="2" fill="#000"/><text x="1787" y="1698.0">−15</text></g>
<g>
<defs><clipPath id="cclip"><path d="M40,1770 L200,1770 L200,1815.5 L126,1815.5 L126,1856 L200,1856 L200,1900 L40,1900 Z"/></clipPath></defs><path clip-path="url(#cclip)" fill-rule="evenodd" fill="#fdb515" d="M57.5,1833.5 A46.5,46.5 0 1,0 150.5,1833.5 A46.5,46.5 0 1,0 57.5,1833.5 Z M77.5,1833.5 A29.5,29.5 0 1,0 136.5,1833.5 A29.5,29.5 0 1,0 77.5,1833.5 Z"/>
<path d="M99.5,1821 C121.5,1815 139.5,1829 166.2,1814 L166.2,1827 C139.5,1842 121.5,1828 99.5,1834 Z" fill="#0095d5"/>
<path d="M99.5,1840.5 C121.5,1834.5 139.5,1848.5 166.2,1833.5 L166.2,1846.5 C139.5,1861.5 121.5,1847.5 99.5,1853.5 Z" fill="#0095d5"/>
</g>
<g font-family="Liberation Sans, sans-serif" fill="#1a1a1a">
<text x="178.8" y="1807" font-size="27" textLength="111.6" lengthAdjust="spacingAndGlyphs">Servicio</text>
<text x="178.8" y="1833" font-size="27" textLength="201.3" lengthAdjust="spacingAndGlyphs">Meteorológico</text>
<text x="178.8" y="1860" font-size="27" textLength="119.9" lengthAdjust="spacingAndGlyphs">Nacional</text>
<text x="180" y="1880" font-size="17.5" stroke="#1a1a1a" stroke-width="0.45" textLength="92.7" lengthAdjust="spacingAndGlyphs">Argentina</text>
</g>
<path d="M523.8,1797.0 L509.8,1797.0 M523.8,1796.1 L512.9,1795.0 M524.0,1795.2 L510.2,1792.5 M524.2,1794.4 L513.7,1791.2 M524.5,1793.6 L511.6,1788.2 M524.9,1792.8 L515.2,1787.6 M525.3,1792.0 L513.7,1784.2 M525.8,1791.3 L517.3,1784.3 M526.4,1790.6 L516.5,1780.7 M527.1,1790.0 L520.1,1781.5 M527.8,1789.5 L520.0,1777.9 M528.6,1789.1 L523.4,1779.4 M529.4,1788.7 L524.0,1775.8 M530.2,1788.4 L527.0,1777.9 M531.0,1788.2 L528.3,1774.4 M531.9,1788.0 L530.8,1777.1 M532.8,1788.0 L532.8,1774.0 M533.7,1788.0 L534.8,1777.1 M534.6,1788.2 L537.3,1774.4 M535.4,1788.4 L538.6,1777.9 M536.2,1788.7 L541.6,1775.8 M537.0,1789.1 L542.2,1779.4 M537.8,1789.5 L545.6,1777.9 M538.5,1790.0 L545.5,1781.5 M539.2,1790.6 L549.1,1780.7 M539.8,1791.3 L548.3,1784.3 M540.3,1792.0 L551.9,1784.2 M540.7,1792.8 L550.4,1787.6 M541.1,1793.6 L554.0,1788.2 M541.4,1794.4 L551.9,1791.2 M541.6,1795.2 L555.4,1792.5 M541.8,1796.1 L552.7,1795.0 M541.8,1797.0 L555.8,1797.0 " stroke="#2a3a63" stroke-width="1" opacity="0.8"/><ellipse cx="532.8" cy="1798" rx="8" ry="6" fill="none" stroke="#2a3a63" stroke-width="1" opacity="0.6"/><circle cx="529.8" cy="1796" r="1.5" fill="#2a3a63"/><circle cx="535.8" cy="1796" r="1.5" fill="#2a3a63"/><ellipse cx="532.8" cy="1844" rx="33" ry="39" fill="none" stroke="#2a3a63" stroke-width="6" stroke-dasharray="2.5 1.5" opacity="0.75"/><ellipse cx="532.8" cy="1841" rx="27" ry="39" fill="#e5e5e5" stroke="#2a3a63" stroke-width="2"/><path d="M519.4,1808.0 L546.2,1808.0 M514.7,1813.5 L550.9,1813.5 M511.5,1819.0 L554.1,1819.0 M509.3,1824.5 L556.3,1824.5 M507.9,1830.0 L557.7,1830.0 M507.1,1835.5 L558.5,1835.5 M506.8,1841.0 L558.8,1841.0 " stroke="#2a3a63" stroke-width="1.2" opacity="0.7"/><path d="M506.79999999999995,1851 Q527.8,1843 558.8,1851" fill="none" stroke="#2a3a63" stroke-width="1" opacity="0.7"/><path d="M509.79999999999995,1863 L532.8,1854 L555.8,1863" fill="none" stroke="#2a3a63" stroke-width="1" opacity="0.7"/><rect x="531.8" y="1815" width="2" height="46" fill="#2a3a63"/><path d="M523.8,1828 Q522.8,1815 531.8,1814 Q540.8,1815 541.8,1825 L541.8,1829 Q532.8,1831 523.8,1828 Z" fill="#e5e5e5" stroke="#2a3a63" stroke-width="1.2"/><path d="M523.8,1853 Q532.8,1848 541.8,1853" fill="none" stroke="#2a3a63" stroke-width="2" opacity="0.8"/><path d="M525.8,1880 L539.8,1880 L539.8,1886 L525.8,1886 Z M528.8,1886 L520.8,1896 M536.8,1886 L544.8,1896" fill="#2a3a63" stroke="#2a3a63" stroke-width="2.2"/>
<path d="M885.0,1797.0 L871.0,1797.0 M885.0,1796.1 L874.1,1795.0 M885.2,1795.2 L871.4,1792.5 M885.4,1794.4 L874.9,1791.2 M885.7,1793.6 L872.8,1788.2 M886.1,1792.8 L876.4,1787.6 M886.5,1792.0 L874.9,1784.2 M887.0,1791.3 L878.5,1784.3 M887.6,1790.6 L877.7,1780.7 M888.3,1790.0 L881.3,1781.5 M889.0,1789.5 L881.2,1777.9 M889.8,1789.1 L884.6,1779.4 M890.6,1788.7 L885.2,1775.8 M891.4,1788.4 L888.2,1777.9 M892.2,1788.2 L889.5,1774.4 M893.1,1788.0 L892.0,1777.1 M894.0,1788.0 L894.0,1774.0 M894.9,1788.0 L896.0,1777.1 M895.8,1788.2 L898.5,1774.4 M896.6,1788.4 L899.8,1777.9 M897.4,1788.7 L902.8,1775.8 M898.2,1789.1 L903.4,1779.4 M899.0,1789.5 L906.8,1777.9 M899.7,1790.0 L906.7,1781.5 M900.4,1790.6 L910.3,1780.7 M901.0,1791.3 L909.5,1784.3 M901.5,1792.0 L913.1,1784.2 M901.9,1792.8 L911.6,1787.6 M902.3,1793.6 L915.2,1788.2 M902.6,1794.4 L913.1,1791.2 M902.8,1795.2 L916.6,1792.5 M903.0,1796.1 L913.9,1795.0 M903.0,1797.0 L917.0,1797.0 " stroke="#2a3a63" stroke-width="1" opacity="0.8"/><ellipse cx="894" cy="1798" rx="8" ry="6" fill="none" stroke="#2a3a63" stroke-width="1" opacity="0.6"/><circle cx="891" cy="1796" r="1.5" fill="#2a3a63"/><circle cx="897" cy="1796" r="1.5" fill="#2a3a63"/><ellipse cx="894" cy="1844" rx="33" ry="39" fill="none" stroke="#2a3a63" stroke-width="6" stroke-dasharray="2.5 1.5" opacity="0.75"/><ellipse cx="894" cy="1841" rx="27" ry="39" fill="#e5e5e5" stroke="#2a3a63" stroke-width="2"/><path d="M880.6,1808.0 L907.4,1808.0 M875.9,1813.5 L912.1,1813.5 M872.7,1819.0 L915.3,1819.0 M870.5,1824.5 L917.5,1824.5 M869.1,1830.0 L918.9,1830.0 M868.3,1835.5 L919.7,1835.5 M868.0,1841.0 L920.0,1841.0 " stroke="#2a3a63" stroke-width="1.2" opacity="0.7"/><path d="M868,1851 Q889,1843 920,1851" fill="none" stroke="#2a3a63" stroke-width="1" opacity="0.7"/><path d="M871,1863 L894,1854 L917,1863" fill="none" stroke="#2a3a63" stroke-width="1" opacity="0.7"/><rect x="893" y="1815" width="2" height="46" fill="#2a3a63"/><path d="M885,1828 Q884,1815 893,1814 Q902,1815 903,1825 L903,1829 Q894,1831 885,1828 Z" fill="#e5e5e5" stroke="#2a3a63" stroke-width="1.2"/><path d="M885,1853 Q894,1848 903,1853" fill="none" stroke="#2a3a63" stroke-width="2" opacity="0.8"/><path d="M887,1880 L901,1880 L901,1886 L887,1886 Z M890,1886 L882,1896 M898,1886 L906,1896" fill="#2a3a63" stroke="#2a3a63" stroke-width="2.2"/>
<g font-family="Liberation Serif, serif" fill="#1f2d55" font-weight="bold">
<text x="583.7" y="1828" font-size="27.5" textLength="131.5" lengthAdjust="spacingAndGlyphs">Ministerio</text>
<text x="583.7" y="1853.5" font-size="27.5" textLength="132.2" lengthAdjust="spacingAndGlyphs">de Defensa</text>
<text x="946.6" y="1827.5" font-size="27.5" textLength="134.4" lengthAdjust="spacingAndGlyphs">Ministerio</text>
<text x="946.6" y="1853.2" font-size="27.5" textLength="162.2" lengthAdjust="spacingAndGlyphs">de Economía</text>
</g>
<g font-family="Liberation Serif, serif" fill="#2a3a63">
<text x="583.7" y="1873.2" font-size="16" textLength="149.7" lengthAdjust="spacingAndGlyphs">República Argentina</text>
<text x="946.6" y="1873.2" font-size="16" textLength="152.7" lengthAdjust="spacingAndGlyphs">República Argentina</text>
</g>
</svg>
</body></html>
